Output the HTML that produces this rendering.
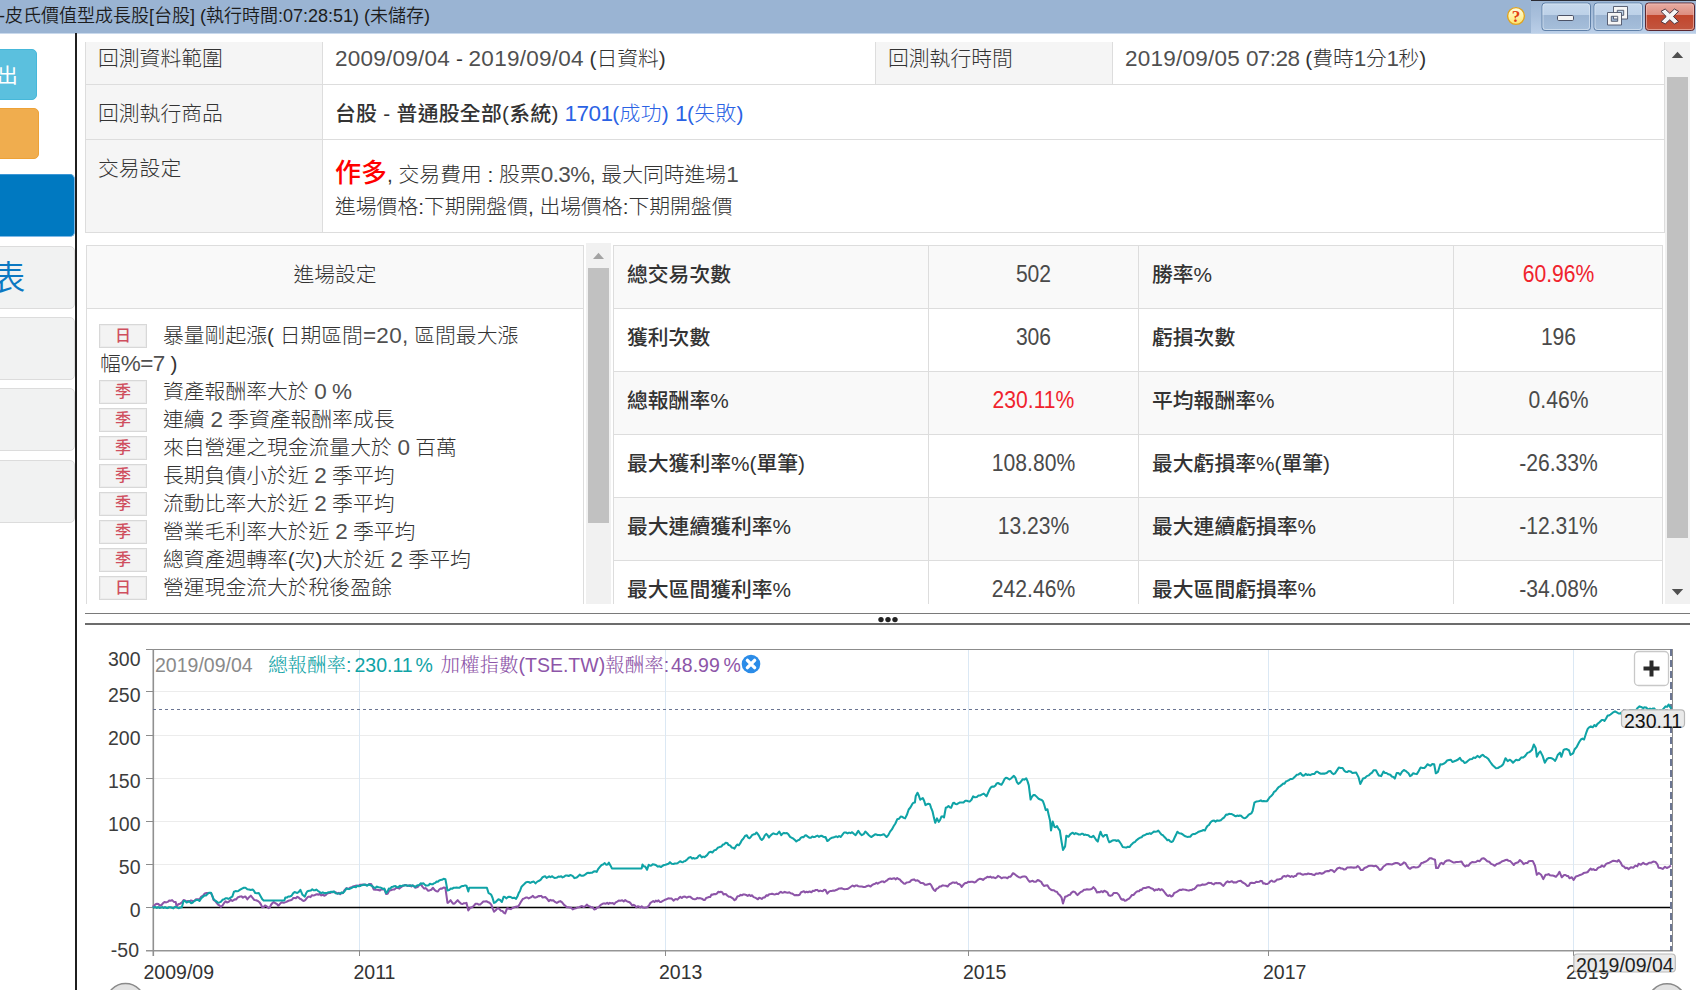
<!DOCTYPE html>
<html lang="zh-Hant">
<head>
<meta charset="utf-8">
<title>回測報告</title>
<style>
*{box-sizing:border-box;margin:0;padding:0}
html,body{width:1696px;height:990px;overflow:hidden;background:#fff}
body{position:relative;font-family:"Liberation Sans","Noto Sans CJK TC","Noto Sans CJK SC",sans-serif;color:#333;font-size:20.8px;font-weight:300}
.d{font-size:22.500px;letter-spacing:.25px;position:relative;top:-.5px;color:#505050}
.n{font-size:22.500px;letter-spacing:-.55px;position:relative;top:-.5px;color:#505050}
.n.k{color:inherit}
.abs{position:absolute}
.t{position:absolute;white-space:nowrap;line-height:28px;height:28px}
/* title bar */
#tb{left:0;top:0;width:1696px;height:33px;background:#9ab4d3}
#tbr{left:1531px;top:0;width:165px;height:33px;background:linear-gradient(#9db6d4,#a9c0dc 50%,#bbcfe8)}
#tbt{left:-1px;top:2px;font-size:18px;color:#1c1c1c;line-height:28px;font-weight:350}
.wb{position:absolute;top:3px;height:28px;width:49px;border:1px solid #5b7fa8;border-radius:3px;background:linear-gradient(#c3d6ea 0,#bcd1e7 45%,#9ab4d2 46%,#a3bcd8 100%);box-shadow:inset 0 0 0 1px rgba(255,255,255,.45)}
/* sidebar */
.sb{position:absolute;border-radius:5px}
.tab{position:absolute;left:-6px;width:81px;background:#f1f2f2;border:1px solid #dcdcdc;border-radius:5px}
/* info table */
.cell{position:absolute;border-right:1px solid #ddd;border-bottom:1px solid #ddd}
.lab{background:#f5f5f5}
/* stats */
.row{position:absolute;left:613px;width:1050px;height:63px;border-bottom:1px solid #ddd}
.row.odd{background:#f9f9f9}
.sl{font-weight:500;color:#333}
.sv{text-align:center;color:#4a4a4a;font-size:23.600px;transform:scaleX(.895)}
.red{color:#f0232d}
.bd{position:absolute;left:99px;width:48px;height:24px;background:#f3f3f3;border:1px solid #d8d8d8;box-shadow:inset 0 0 0 1px #ececec;color:#cf4f5e;font-size:16px;line-height:22px;text-align:center;font-weight:500}
.li{position:absolute;left:163px;white-space:nowrap;line-height:28px;height:28px;color:#333}
svg text{font-family:"Liberation Sans","Noto Serif CJK TC","Noto Serif CJK SC",sans-serif}
</style>
</head>
<body>

<!-- ===== title bar ===== -->
<div id="tb" class="abs"></div>
<div id="tbr" class="abs"></div>
<div class="abs" style="left:0;top:33px;width:1696px;height:1px;background:#c9d9ec"></div>
<div class="abs" style="left:1531px;top:0;width:165px;height:1px;background:#2b2b33"></div>
<div id="tbt" class="t">-皮氏價值型成長股[台股] (執行時間:07:28:51) (未儲存)</div>
<svg class="abs" style="left:1500px;top:0" width="196" height="34" viewBox="1500 0 196 34">
  <defs>
    <linearGradient id="qg" x1="0" y1="0" x2="0" y2="1"><stop offset="0" stop-color="#fffde2"/><stop offset="0.5" stop-color="#fff3a8"/><stop offset="1" stop-color="#fde36c"/></linearGradient>
    <linearGradient id="bg1" x1="0" y1="0" x2="0" y2="1"><stop offset="0" stop-color="#c6d8ec"/><stop offset="0.42" stop-color="#bdd1e8"/><stop offset="0.43" stop-color="#9bb4d2"/><stop offset="1" stop-color="#a6bfdb"/></linearGradient>
    <linearGradient id="bg2" x1="0" y1="0" x2="0" y2="1"><stop offset="0" stop-color="#e9aea4"/><stop offset="0.42" stop-color="#dd8d80"/><stop offset="0.43" stop-color="#c2452c"/><stop offset="1" stop-color="#c2563f"/></linearGradient>
  </defs>
  <circle cx="1516" cy="16" r="8.400" fill="url(#qg)" stroke="#dfa322" stroke-width="1.400"/>
  <text x="1516" y="21.600" text-anchor="middle" font-size="17" font-weight="bold" fill="#e2410f" style="font-family:'Liberation Serif',serif">?</text>
  <rect x="1542" y="3" width="48.5" height="27.5" rx="3" fill="url(#bg1)" stroke="#5f80a8" stroke-width="1"/>
  <rect x="1543" y="4" width="46.5" height="25.5" rx="2.5" fill="none" stroke="#dbe7f3" stroke-opacity=".7" stroke-width="1"/>
  <rect x="1594" y="3" width="48.5" height="27.5" rx="3" fill="url(#bg1)" stroke="#5f80a8" stroke-width="1"/>
  <rect x="1595" y="4" width="46.5" height="25.5" rx="2.5" fill="none" stroke="#dbe7f3" stroke-opacity=".7" stroke-width="1"/>
  <rect x="1645.5" y="3" width="49" height="27.5" rx="3" fill="url(#bg2)" stroke="#5b2730" stroke-width="1"/>
  <rect x="1646.5" y="4" width="47" height="25.5" rx="2.5" fill="none" stroke="#f3c7be" stroke-opacity=".6" stroke-width="1"/>
  <!-- minimize glyph -->
  <rect x="1557.5" y="15.5" width="16" height="5" rx="1.2" fill="#f4f4f4" stroke="#4c5266" stroke-width="1"/>
  <!-- restore glyph -->
  <path d="M1613.500 6.500h14v12.500h-14z M1617.300 10.300h6.400v5h-6.400z" fill="#f6f6f6" fill-rule="evenodd" stroke="#4c5266" stroke-width=".9"/>
  <path d="M1607.500 12.500h14v12.500h-14z M1611.300 16.300h6.400v5h-6.400z" fill="#f6f6f6" fill-rule="evenodd" stroke="#4c5266" stroke-width=".9"/>
  <!-- close glyph -->
  <path d="M1661 11.400 l4.200 -2.400 l4.600 4.300 l4.600 -4.300 l4.200 2.400 l-5.200 5.100 l5.200 5.100 l-4.200 2.400 l-4.600 -4.300 l-4.600 4.300 l-4.200 -2.400 l5.200 -5.100z" fill="#f6f6f6" stroke="#4a3540" stroke-width="1" stroke-linejoin="round"/>
</svg>


<!-- ===== sidebar ===== -->
<div class="sb" style="left:-8px;top:49px;width:45px;height:51px;background:#5bc0de;border:1px solid #46b8da"></div>
<div class="t" style="left:-3px;top:62px;font-size:20.8px;color:#fff;line-height:28px;font-weight:400">出</div>
<div class="sb" style="left:-8px;top:108px;width:47px;height:51px;background:#f0ad4e;border:1px solid #eea236"></div>
<div class="sb" style="left:-8px;top:174px;width:83px;height:63px;background:#0079c1;border:1px solid #7fb9e6;border-top-color:#3d97d6"></div>
<div class="tab" style="top:246px;height:63px"></div>
<div class="tab" style="top:317px;height:63px"></div>
<div class="tab" style="top:388px;height:63px"></div>
<div class="tab" style="top:460px;height:63px"></div>
<div class="t" style="left:-8.400px;top:258px;font-size:33.800px;color:#0b78c2;line-height:40px;height:40px;font-weight:350">表</div>
<div class="abs" style="left:75px;top:33px;width:2px;height:957px;background:#1f1f1f"></div>


<!-- ===== info table ===== -->
<div class="abs" style="left:85px;top:42px;width:1px;height:191px;background:#ddd"></div>
<div class="cell lab" style="left:86px;top:42px;width:237px;height:43px"></div>
<div class="cell" style="left:323px;top:42px;width:553px;height:43px"></div>
<div class="cell lab" style="left:876px;top:42px;width:237px;height:43px"></div>
<div class="cell" style="left:1113px;top:42px;width:552px;height:43px"></div>
<div class="cell lab" style="left:86px;top:85px;width:237px;height:55px"></div>
<div class="cell" style="left:323px;top:85px;width:1342px;height:55px"></div>
<div class="cell lab" style="left:86px;top:140px;width:237px;height:93px"></div>
<div class="cell" style="left:323px;top:140px;width:1342px;height:93px"></div>
<div class="t" style="left:98px;top:45px">回測資料範圍</div>
<div class="t" style="left:335px;top:45px"><span class="d">2009/09/04</span> - <span class="d">2019/09/04</span> (日資料)</div>
<div class="t" style="left:888px;top:45px">回測執行時間</div>
<div class="t" style="left:1125px;top:45px"><span class="d">2019/09/05</span> <span class="n">07:28</span> (費時<span class="n">1</span>分<span class="n">1</span>秒)</div>
<div class="t" style="left:98px;top:100px">回測執行商品</div>
<div class="t" style="left:335px;top:100px"><b style="font-weight:500;letter-spacing:.3px">台股 - 普通股全部(系統)</b> <span style="color:#2a62e4;letter-spacing:.3px"><span class="n k">1701</span>(成功) <span class="n k">1</span>(失敗)</span></div>
<div class="t" style="left:98px;top:155px">交易設定</div>
<div class="t" style="left:335px;top:156px;line-height:34px;height:34px"><b style="font-size:26px;color:#f00;font-weight:500">作多</b>, 交易費用 : 股票<span class="n">0.3%</span>, 最大同時進場<span class="n">1</span></div>
<div class="t" style="left:335px;top:193px">進場價格:下期開盤價, 出場價格:下期開盤價</div>
<!-- main scrollbar -->
<div class="abs" style="left:1665px;top:42px;width:25px;height:562px;background:#f1f1f1"></div>
<div class="abs" style="left:1667px;top:77px;width:21px;height:461px;background:#c1c1c1"></div>
<svg class="abs" style="left:1665px;top:42px" width="25" height="562"><path d="M6.800 16l5.700-6.200l5.700 6.200z" fill="#505050"/><path d="M6.800 547l5.700 6.200l5.700-6.200z" fill="#505050"/></svg>


<!-- ===== entry panel ===== -->
<div class="abs" style="left:86px;top:245px;width:498px;height:359px;border:1px solid #ddd;border-bottom:none"></div>
<div class="abs" style="left:87px;top:246px;width:496px;height:63px;background:#f9f9f9;border-bottom:1px solid #ddd"></div>
<div class="t" style="left:87px;top:261px;width:496px;text-align:center">進場設定</div>
<div class="bd" style="top:323.5px">日</div><div class="li" style="top:322px">暴量剛起漲( 日期區間<span class="n" style="letter-spacing:.3px">=20,</span> 區間最大漲</div>
<div class="li" style="left:100px;top:350px">幅<span class="n">%=7</span> )</div>
<div class="bd" style="top:379.5px">季</div><div class="li" style="top:378px">資產報酬率大於 <span class="n">0 %</span></div>
<div class="bd" style="top:407.5px">季</div><div class="li" style="top:406px">連續 <span class="n">2</span> 季資產報酬率成長</div>
<div class="bd" style="top:435.5px">季</div><div class="li" style="top:434px">來自營運之現金流量大於 <span class="n">0</span> 百萬</div>
<div class="bd" style="top:463.5px">季</div><div class="li" style="top:462px">長期負債小於近 <span class="n">2</span> 季平均</div>
<div class="bd" style="top:491.5px">季</div><div class="li" style="top:490px">流動比率大於近 <span class="n">2</span> 季平均</div>
<div class="bd" style="top:519.5px">季</div><div class="li" style="top:518px">營業毛利率大於近 <span class="n">2</span> 季平均</div>
<div class="bd" style="top:547.5px">季</div><div class="li" style="top:546px">總資產週轉率(次)大於近 <span class="n">2</span> 季平均</div>
<div class="bd" style="top:575.5px">日</div><div class="li" style="top:574px">營運現金流大於稅後盈餘</div>
<!-- inner scrollbar -->
<div class="abs" style="left:586px;top:243px;width:25px;height:361px;background:#f1f1f1"></div>
<div class="abs" style="left:588px;top:268px;width:21px;height:255px;background:#c1c1c1"></div>
<svg class="abs" style="left:586px;top:243px" width="25" height="24"><path d="M7 16l5.500-6.200l5.500 6.200z" fill="#a3a3a3"/></svg>


<!-- ===== stats ===== -->
<div class="abs" style="left:613px;top:245px;width:1050px;height:359px;overflow:hidden;border-top:1px solid #ddd;border-left:1px solid #ddd;border-right:1px solid #ddd">
<div class="abs" style="left:0;top:0;width:1048px;height:63px;background:#f9f9f9;border-bottom:1px solid #ddd"></div>
<div class="abs" style="left:0;top:63px;width:1048px;height:63px;border-bottom:1px solid #ddd"></div>
<div class="abs" style="left:0;top:126px;width:1048px;height:63px;background:#f9f9f9;border-bottom:1px solid #ddd"></div>
<div class="abs" style="left:0;top:189px;width:1048px;height:63px;border-bottom:1px solid #ddd"></div>
<div class="abs" style="left:0;top:252px;width:1048px;height:63px;background:#f9f9f9;border-bottom:1px solid #ddd"></div>
<div class="abs" style="left:0;top:315px;width:1048px;height:63px"></div>
<div class="abs" style="left:314px;top:0;width:1px;height:360px;background:#ddd"></div>
<div class="abs" style="left:524px;top:0;width:1px;height:360px;background:#ddd"></div>
<div class="abs" style="left:839px;top:0;width:1px;height:360px;background:#ddd"></div>
</div>
<div class="t sl" style="left:627px;top:261px">總交易次數</div>
<div class="t sv " style="left:929px;top:260px;width:209px">502</div>
<div class="t sl" style="left:1152px;top:261px">勝率%</div>
<div class="t sv red" style="left:1454px;top:260px;width:209px">60.96%</div>
<div class="t sl" style="left:627px;top:324px">獲利次數</div>
<div class="t sv " style="left:929px;top:323px;width:209px">306</div>
<div class="t sl" style="left:1152px;top:324px">虧損次數</div>
<div class="t sv " style="left:1454px;top:323px;width:209px">196</div>
<div class="t sl" style="left:627px;top:387px">總報酬率%</div>
<div class="t sv red" style="left:929px;top:386px;width:209px">230.11%</div>
<div class="t sl" style="left:1152px;top:387px">平均報酬率%</div>
<div class="t sv " style="left:1454px;top:386px;width:209px">0.46%</div>
<div class="t sl" style="left:627px;top:450px">最大獲利率%(單筆)</div>
<div class="t sv " style="left:929px;top:449px;width:209px">108.80%</div>
<div class="t sl" style="left:1152px;top:450px">最大虧損率%(單筆)</div>
<div class="t sv " style="left:1454px;top:449px;width:209px">-26.33%</div>
<div class="t sl" style="left:627px;top:513px">最大連續獲利率%</div>
<div class="t sv " style="left:929px;top:512px;width:209px">13.23%</div>
<div class="t sl" style="left:1152px;top:513px">最大連續虧損率%</div>
<div class="t sv " style="left:1454px;top:512px;width:209px">-12.31%</div>
<div class="t sl" style="left:627px;top:576px">最大區間獲利率%</div>
<div class="t sv " style="left:929px;top:575px;width:209px">242.46%</div>
<div class="t sl" style="left:1152px;top:576px">最大區間虧損率%</div>
<div class="t sv " style="left:1454px;top:575px;width:209px">-34.08%</div>
<div class="abs" style="left:600px;top:604px;width:1070px;height:9px;background:#fff"></div>


<!-- ===== splitter ===== -->
<div class="abs" style="left:85px;top:613px;width:1605px;height:1px;background:#7a7a7a"></div>
<div class="abs" style="left:85px;top:623px;width:1605px;height:2px;background:#6c6c6c"></div>
<svg class="abs" style="left:875px;top:614px" width="26" height="10"><circle cx="6" cy="5.600" r="2.700" fill="#222"/><circle cx="13" cy="5.600" r="2.700" fill="#222"/><circle cx="20" cy="5.600" r="2.700" fill="#222"/></svg>


<!-- ===== chart ===== -->
<svg class="abs" style="left:0;top:630px" width="1696" height="360" viewBox="0 630 1696 360">
  <g shape-rendering="crispEdges">
    <!-- horizontal grid -->
    <g stroke="#ececec" stroke-width="1">
      <line x1="153" x2="1672" y1="691.5" y2="691.5"/><line x1="153" x2="1672" y1="735.5" y2="735.5"/>
      <line x1="153" x2="1672" y1="778.5" y2="778.5"/><line x1="153" x2="1672" y1="821.5" y2="821.5"/>
      <line x1="153" x2="1672" y1="864.5" y2="864.5"/>
    </g>
    <!-- vertical grid -->
    <g stroke="#dbe8f4" stroke-width="1">
      <line x1="359.500" x2="359.500" y1="650" y2="950"/><line x1="665.500" x2="665.500" y1="650" y2="950"/>
      <line x1="968.500" x2="968.500" y1="650" y2="950"/><line x1="1268.500" x2="1268.500" y1="650" y2="950"/>
      <line x1="1573.500" x2="1573.500" y1="650" y2="950"/>
    </g>
    <!-- axes -->
    <g stroke="#8c8c8c" stroke-width="1">
      <line x1="146" x2="1673" y1="649.5" y2="649.5"/>
      <line x1="146" x2="1673" y1="950.700" y2="950.700" stroke="#959595" stroke-width="1.600" shape-rendering="auto"/>
      <line x1="153.300" x2="153.300" y1="649" y2="956" stroke="#909090" stroke-width="1.600" shape-rendering="auto"/>
      <line x1="1672.500" x2="1672.500" y1="649" y2="951"/>
      <line x1="146" x2="153" y1="691.5" y2="691.5"/><line x1="146" x2="153" y1="735.5" y2="735.5"/>
      <line x1="146" x2="153" y1="778.5" y2="778.5"/><line x1="146" x2="153" y1="821.5" y2="821.5"/>
      <line x1="146" x2="153" y1="864.5" y2="864.5"/><line x1="146" x2="153" y1="907.5" y2="907.5"/>
      <line x1="359.500" x2="359.500" y1="950" y2="956"/><line x1="665.500" x2="665.500" y1="950" y2="956"/>
      <line x1="968.500" x2="968.500" y1="950" y2="956"/><line x1="1268.500" x2="1268.500" y1="950" y2="956"/>
      <line x1="1573.500" x2="1573.500" y1="950" y2="956"/>
    </g>
    <line x1="153" x2="1672" y1="907.400" y2="907.400" stroke="#000" stroke-width="1.500" shape-rendering="auto"/>
    <line x1="153" x2="1672" y1="709.500" y2="709.500" stroke="#6b7592" stroke-width="1" stroke-dasharray="3 3"/>
    <line x1="1671" x2="1671" y1="649" y2="951" stroke="#6b7592" stroke-width="2" stroke-dasharray="7 4"/>
  </g>
  <!-- series -->
  <path d="M152.7 906.9 L154.1 905.7 L155.6 904.3 L157.1 903.7 L158.4 904.0 L159.7 905.5 L161.5 905.0 L163.3 902.8 L164.7 902.0 L166.2 902.4 L167.7 901.9 L169.2 900.6 L170.6 900.8 L172.1 900.1 L173.9 901.9 L175.7 901.9 L176.5 906.3 L178.3 904.3 L180.1 903.7 L181.8 902.5 L183.6 900.1 L185.1 900.5 L186.6 901.5 L188.0 901.0 L189.5 901.4 L191.0 900.5 L192.5 901.0 L194.2 900.9 L196.0 899.3 L197.8 899.2 L199.5 899.3 L201.3 896.6 L203.1 895.7 L204.8 893.5 L206.6 893.1 L208.1 893.1 L209.6 893.0 L211.0 893.1 L212.4 896.2 L213.7 900.1 L215.2 900.9 L216.6 902.8 L218.1 904.6 L219.4 905.4 L220.8 906.9 L222.5 905.5 L224.3 902.8 L225.6 901.4 L227.0 902.4 L228.3 902.1 L229.6 901.0 L230.9 899.9 L232.3 901.0 L233.6 900.1 L234.9 899.3 L236.2 899.4 L237.6 897.5 L238.9 897.0 L240.2 896.6 L241.5 896.4 L242.9 897.6 L244.2 896.8 L245.5 896.6 L247.3 899.3 L249.1 897.2 L250.8 895.7 L252.6 897.8 L254.4 900.1 L256.1 900.2 L257.9 901.0 L259.4 902.2 L260.9 904.4 L262.3 907.2 L263.7 907.0 L265.0 905.5 L266.8 906.4 L268.5 908.1 L269.8 907.4 L271.2 904.5 L272.5 903.0 L273.8 901.9 L275.3 903.2 L276.8 903.9 L278.3 905.8 L280.0 903.8 L281.8 902.3 L283.3 902.8 L284.9 902.4 L286.4 901.9 L288.0 901.0 L289.3 900.5 L290.6 900.3 L292.0 899.6 L293.3 898.0 L294.6 898.0 L295.9 898.2 L297.3 896.8 L298.6 897.5 L299.9 898.8 L301.2 899.2 L302.6 900.6 L303.9 901.0 L305.2 900.2 L306.6 898.4 L307.9 896.9 L309.2 896.6 L310.5 897.1 L311.9 895.2 L313.2 895.5 L314.5 895.2 L315.8 894.6 L317.2 894.2 L318.5 894.7 L319.8 894.0 L321.3 895.4 L322.8 894.7 L324.2 895.7 L325.7 895.1 L327.2 893.6 L328.7 893.1 L330.0 893.0 L331.3 892.4 L332.6 891.8 L334.0 892.2 L335.7 892.2 L337.5 893.6 L338.8 892.9 L340.2 894.1 L341.5 893.2 L342.8 893.1 L344.6 890.1 L346.4 888.1 L347.7 888.7 L349.0 888.7 L350.3 887.5 L351.7 887.4 L353.1 886.4 L354.5 886.1 L355.9 885.6 L357.3 885.7 L358.7 885.6 L360.2 884.7 L361.6 884.7 L363.0 884.5 L364.4 884.9 L365.8 884.6 L367.1 885.1 L368.5 884.7 L369.8 883.9 L371.1 883.9 L372.4 886.5 L373.8 889.5 L375.3 889.8 L376.9 889.7 L378.4 889.9 L380.0 890.4 L381.4 889.3 L382.9 889.4 L384.4 889.5 L386.2 894.0 L387.6 893.7 L389.1 890.9 L390.6 890.4 L391.9 889.8 L393.2 889.5 L394.6 889.4 L395.9 888.1 L397.7 887.8 L399.4 888.6 L400.8 887.3 L402.1 886.4 L403.4 885.8 L404.7 885.1 L406.1 885.0 L407.4 886.0 L408.7 885.8 L410.0 885.1 L411.4 886.5 L412.7 885.5 L414.0 886.2 L415.3 887.8 L416.7 887.3 L418.0 886.7 L419.3 885.1 L420.7 884.2 L422.4 886.6 L424.2 888.6 L425.5 888.1 L426.8 889.3 L428.2 890.8 L429.5 890.4 L431.3 889.7 L433.0 887.8 L434.8 890.2 L436.6 891.3 L437.9 891.5 L439.2 889.5 L440.6 888.6 L441.9 888.6 L443.6 887.5 L445.4 887.8 L447.5 902.8 L448.0 902.9 L449.3 901.6 L450.6 900.2 L451.9 902.3 L453.3 903.8 L454.7 903.4 L456.2 901.8 L457.7 900.2 L459.5 902.3 L461.2 903.8 L462.6 904.0 L463.9 903.2 L465.2 903.2 L466.5 902.9 L468.3 910.5 L470.1 908.0 L471.8 907.3 L473.6 906.1 L475.4 903.8 L477.1 903.7 L478.9 904.6 L480.4 904.4 L481.9 902.9 L483.3 901.6 L484.8 901.4 L486.3 901.2 L487.8 902.0 L489.5 902.8 L491.3 904.6 L492.6 908.4 L494.0 911.7 L495.7 910.3 L497.5 908.2 L499.3 908.8 L501.0 910.8 L502.4 910.9 L503.7 912.6 L505.1 913.5 L507.2 908.2 L509.0 908.8 L510.8 909.1 L512.5 908.0 L514.3 907.3 L516.1 906.6 L517.8 906.9 L519.6 904.2 L521.4 901.1 L522.8 899.0 L524.3 898.4 L525.8 897.6 L527.3 897.5 L528.7 898.4 L530.2 897.6 L531.5 897.0 L532.9 895.8 L534.2 897.4 L535.5 897.6 L537.0 897.0 L538.5 896.1 L539.9 896.1 L541.3 895.9 L542.6 897.5 L543.9 897.2 L545.3 897.0 L547.0 898.7 L548.8 901.1 L550.3 899.9 L551.7 900.5 L553.2 900.2 L555.0 901.9 L556.8 902.9 L558.5 901.8 L560.3 901.1 L562.1 902.4 L563.8 904.6 L565.3 905.8 L566.8 907.2 L568.3 907.3 L569.7 907.5 L571.2 907.8 L572.7 909.4 L574.4 908.5 L576.2 908.2 L577.7 907.4 L579.2 907.3 L580.6 906.4 L582.0 906.1 L583.3 906.9 L585.1 906.4 L586.8 904.6 L588.3 906.0 L589.8 906.4 L591.2 907.3 L592.7 907.3 L594.2 909.4 L595.7 909.1 L597.1 907.5 L598.6 907.3 L600.1 905.5 L601.6 904.3 L603.0 903.6 L604.5 903.4 L605.8 903.8 L607.2 902.7 L608.5 903.9 L609.8 902.9 L611.3 903.3 L612.8 903.1 L614.2 904.1 L615.7 902.4 L617.2 901.6 L618.7 900.6 L620.4 900.7 L622.2 900.2 L623.7 901.4 L625.2 900.1 L626.6 901.1 L628.1 901.8 L629.6 902.3 L631.0 903.8 L632.4 905.5 L633.7 904.8 L635.0 905.6 L636.4 907.3 L637.7 906.2 L639.0 906.6 L640.3 907.4 L641.7 906.4 L643.1 907.6 L644.6 907.7 L646.1 907.6 L647.6 907.0 L649.0 905.3 L650.5 902.9 L651.8 902.0 L653.2 901.1 L654.5 902.0 L655.8 900.6 L657.1 901.4 L658.5 900.4 L659.8 901.9 L661.1 902.0 L662.4 901.1 L663.8 900.4 L665.1 899.7 L666.4 899.3 L668.2 898.3 L670.0 898.4 L671.7 898.6 L673.5 900.6 L674.8 899.5 L676.2 899.1 L677.5 899.6 L678.8 898.1 L680.3 896.9 L681.8 898.0 L683.2 896.7 L685.0 896.6 L686.8 897.6 L688.5 896.8 L690.3 896.7 L691.8 898.2 L693.3 899.1 L694.7 899.3 L696.1 898.9 L697.4 897.9 L698.7 898.4 L700.0 898.1 L701.8 898.7 L703.6 899.9 L704.9 900.0 L706.2 897.9 L707.6 897.5 L708.9 897.0 L710.2 897.0 L711.5 894.6 L712.9 894.6 L714.2 894.0 L715.5 894.2 L716.8 893.6 L718.2 891.8 L719.5 892.3 L720.8 891.8 L722.2 892.3 L723.5 894.4 L724.8 894.0 L726.1 894.2 L727.5 895.8 L728.8 896.8 L730.1 896.7 L731.6 897.6 L733.1 898.6 L734.5 900.2 L735.9 899.3 L737.2 896.7 L738.0 896.2 L739.3 896.0 L740.6 894.9 L741.9 895.3 L743.3 894.4 L744.7 894.6 L746.2 895.0 L747.7 895.9 L749.2 894.7 L750.6 896.0 L752.1 895.3 L753.6 897.1 L755.1 897.6 L756.5 898.3 L757.9 899.3 L759.2 897.7 L760.5 898.2 L761.8 898.9 L763.3 897.6 L764.8 897.4 L766.3 895.3 L767.7 895.8 L769.2 894.3 L770.7 894.1 L772.2 893.7 L773.6 894.2 L775.1 894.4 L776.6 893.8 L778.1 894.1 L779.5 892.7 L780.9 891.8 L782.2 892.8 L783.5 892.5 L784.8 891.8 L786.3 892.6 L787.8 892.7 L789.3 892.3 L790.6 893.3 L791.9 893.5 L793.2 894.2 L794.6 895.3 L796.3 895.1 L798.1 895.3 L799.6 894.7 L801.1 892.2 L802.5 891.8 L803.9 891.3 L805.2 892.5 L806.5 891.7 L807.8 892.3 L809.6 891.5 L811.4 892.3 L812.8 890.7 L814.3 890.9 L815.8 890.0 L817.3 889.9 L818.7 891.3 L820.2 890.6 L821.5 891.1 L822.9 891.2 L824.2 889.7 L825.5 890.0 L827.3 893.6 L828.8 891.9 L830.2 891.0 L831.7 890.9 L833.2 890.6 L834.7 890.7 L836.1 890.0 L837.5 889.5 L838.8 888.6 L840.1 888.5 L841.4 888.3 L842.9 888.8 L844.4 889.2 L845.9 889.1 L847.2 888.9 L848.5 888.5 L849.8 887.5 L851.2 886.5 L852.6 885.5 L854.1 886.5 L855.6 885.6 L857.1 885.5 L858.5 886.3 L860.0 886.5 L861.8 886.5 L863.6 887.0 L865.3 886.9 L867.1 886.0 L868.9 885.6 L870.6 886.5 L872.1 885.1 L873.6 884.2 L875.1 883.8 L876.4 882.7 L877.7 883.7 L879.0 882.7 L880.4 882.1 L881.7 881.5 L883.0 881.4 L884.3 882.3 L885.7 881.2 L887.1 880.3 L888.6 878.9 L890.1 878.5 L891.6 879.0 L893.0 878.6 L894.5 878.2 L895.8 879.4 L897.2 878.0 L898.5 879.0 L899.8 879.4 L901.1 881.1 L902.5 882.3 L903.8 883.5 L905.1 883.8 L906.6 882.4 L908.1 882.3 L909.6 882.1 L911.0 880.5 L912.5 879.7 L914.0 879.4 L915.7 880.7 L917.5 880.3 L919.0 881.3 L920.5 882.9 L921.9 882.9 L923.4 883.3 L924.9 884.8 L926.4 884.7 L928.1 884.2 L929.9 883.8 L931.2 885.1 L932.5 887.9 L933.9 890.0 L935.2 890.9 L936.7 888.7 L938.1 888.1 L939.6 886.5 L941.1 886.4 L942.6 885.4 L944.0 885.6 L945.8 885.8 L947.6 886.5 L949.4 884.3 L951.1 883.5 L952.4 882.6 L953.8 882.5 L955.1 882.9 L956.4 882.4 L957.8 883.9 L959.1 884.1 L960.4 884.9 L961.7 887.0 L963.5 884.6 L965.3 882.9 L966.7 883.0 L968.2 881.8 L969.7 882.1 L971.2 881.8 L972.6 881.7 L974.1 882.4 L975.6 882.0 L977.1 880.5 L978.5 879.4 L980.0 878.8 L981.5 879.0 L983.0 879.9 L984.4 878.7 L985.9 877.9 L987.4 876.8 L988.9 877.3 L990.3 876.6 L991.8 877.6 L993.6 877.3 L995.3 878.2 L996.7 877.4 L998.0 875.9 L999.8 876.8 L1001.5 878.2 L1003.0 877.6 L1004.5 877.4 L1006.0 877.6 L1007.4 878.2 L1008.9 876.7 L1010.4 876.8 L1011.7 875.1 L1013.0 873.2 L1014.5 874.0 L1016.0 875.2 L1017.5 876.4 L1018.9 877.2 L1020.4 877.6 L1021.9 876.8 L1023.3 876.6 L1024.8 876.4 L1026.2 877.0 L1028.0 879.8 L1029.7 881.8 L1031.2 881.2 L1032.7 880.8 L1034.2 881.8 L1035.9 881.7 L1037.7 880.0 L1039.5 880.8 L1041.2 881.8 L1042.6 884.4 L1043.9 885.9 L1045.7 885.4 L1047.4 885.3 L1049.2 888.3 L1051.0 889.7 L1052.4 890.3 L1053.9 890.3 L1055.4 891.5 L1056.9 891.8 L1058.3 894.0 L1059.8 895.1 L1061.6 897.7 L1063.0 903.5 L1065.1 896.8 L1066.9 896.2 L1068.6 895.1 L1070.0 894.8 L1071.3 892.9 L1073.1 891.6 L1074.8 891.9 L1076.2 893.7 L1077.5 895.1 L1079.3 893.2 L1081.0 891.9 L1082.5 891.2 L1084.0 889.8 L1085.5 889.7 L1086.9 889.2 L1088.4 889.6 L1089.9 889.4 L1091.6 889.1 L1093.4 887.1 L1095.2 889.0 L1097.0 892.4 L1098.4 892.0 L1099.9 892.2 L1101.4 891.2 L1102.8 892.2 L1104.3 890.8 L1105.8 891.5 L1107.3 892.3 L1108.7 895.3 L1110.2 895.9 L1112.0 895.3 L1113.8 892.9 L1115.3 892.9 L1116.9 892.9 L1118.9 894.9 L1120.8 898.6 L1122.2 899.8 L1123.5 899.3 L1124.8 900.7 L1126.1 900.4 L1127.6 899.4 L1129.1 898.6 L1130.6 896.8 L1132.0 895.0 L1133.5 895.0 L1135.0 893.3 L1136.3 891.9 L1137.6 891.3 L1139.0 891.3 L1140.3 889.7 L1141.6 889.9 L1142.9 888.3 L1144.3 887.9 L1145.6 888.0 L1147.4 887.3 L1149.1 887.1 L1150.5 888.0 L1151.8 888.6 L1153.1 889.0 L1154.4 890.6 L1155.9 889.6 L1157.4 889.9 L1158.9 888.9 L1160.3 890.2 L1161.8 889.2 L1163.3 890.6 L1165.1 893.0 L1166.8 895.1 L1168.3 896.0 L1169.8 895.1 L1171.2 896.5 L1172.7 895.8 L1174.2 893.0 L1175.7 892.4 L1177.1 891.7 L1178.6 890.7 L1180.1 889.7 L1181.4 890.0 L1182.7 889.4 L1184.1 889.6 L1185.4 889.7 L1187.2 890.3 L1188.9 890.6 L1190.3 890.0 L1191.6 890.1 L1192.9 889.2 L1194.2 888.9 L1195.7 887.6 L1197.2 885.6 L1198.7 885.3 L1200.0 885.4 L1201.3 885.0 L1202.6 884.4 L1204.0 884.8 L1205.4 884.6 L1206.9 883.9 L1208.4 882.7 L1209.7 883.0 L1211.0 882.9 L1212.4 883.9 L1213.7 884.4 L1215.0 883.3 L1216.4 883.0 L1217.7 883.2 L1219.0 883.0 L1220.5 883.2 L1222.0 884.8 L1223.4 885.9 L1224.8 884.1 L1226.1 882.3 L1227.6 881.3 L1229.0 882.2 L1230.5 881.8 L1232.0 881.2 L1233.5 882.6 L1234.9 882.3 L1236.4 882.4 L1237.9 881.4 L1239.4 880.9 L1240.8 880.8 L1242.3 882.3 L1243.8 883.0 L1245.5 884.2 L1247.3 885.9 L1248.8 885.7 L1250.3 883.0 L1251.7 882.7 L1253.2 883.1 L1254.7 883.0 L1256.2 881.8 L1257.6 881.9 L1259.1 881.8 L1260.6 880.9 L1261.9 881.1 L1263.2 883.4 L1264.6 883.3 L1265.9 884.1 L1267.4 884.0 L1268.8 883.0 L1270.3 881.3 L1271.6 880.5 L1273.0 881.6 L1274.3 881.8 L1275.6 880.9 L1277.1 879.5 L1278.6 879.4 L1280.0 879.1 L1281.5 878.6 L1283.0 876.4 L1284.5 876.0 L1285.9 876.7 L1287.4 875.5 L1288.9 876.0 L1290.4 876.9 L1291.8 876.0 L1293.3 877.0 L1294.6 876.1 L1296.0 876.0 L1297.3 873.8 L1298.6 873.5 L1300.1 873.4 L1301.6 874.3 L1303.0 874.7 L1304.8 874.1 L1306.6 874.2 L1308.2 873.5 L1309.8 873.9 L1311.4 874.0 L1313.0 874.8 L1314.5 875.1 L1316.1 873.6 L1318.0 873.7 L1319.8 873.0 L1321.7 873.8 L1323.6 873.0 L1325.5 871.4 L1327.4 871.1 L1328.9 871.1 L1330.5 870.0 L1332.3 870.3 L1334.2 872.1 L1335.8 870.4 L1337.3 868.5 L1339.5 867.6 L1341.1 868.5 L1342.6 868.6 L1344.1 869.5 L1345.6 869.3 L1347.1 867.6 L1349.0 867.5 L1350.9 867.3 L1352.8 867.6 L1354.7 867.6 L1356.2 867.5 L1357.7 866.1 L1359.2 867.3 L1360.8 870.0 L1362.7 870.0 L1364.5 868.0 L1366.4 867.3 L1368.3 866.1 L1370.2 865.7 L1372.1 865.8 L1374.0 866.3 L1375.9 865.8 L1377.8 867.4 L1379.7 870.0 L1381.6 869.2 L1383.5 866.5 L1385.0 865.5 L1386.5 864.2 L1388.4 864.0 L1390.3 864.2 L1392.2 864.4 L1394.1 863.5 L1395.6 863.1 L1397.1 863.0 L1398.6 863.4 L1400.2 865.0 L1402.0 864.2 L1403.9 862.4 L1405.5 863.2 L1407.0 865.8 L1408.5 867.9 L1410.0 868.8 L1411.9 867.4 L1413.8 867.0 L1415.7 867.4 L1417.6 867.3 L1419.5 866.1 L1421.4 863.0 L1422.9 862.7 L1424.4 862.0 L1425.9 861.5 L1427.4 860.5 L1429.7 858.2 L1431.2 858.2 L1432.7 858.9 L1435.0 859.7 L1436.1 868.0 L1438.0 868.0 L1440.3 863.5 L1441.8 862.9 L1443.3 864.2 L1445.2 861.5 L1447.1 860.5 L1449.0 860.2 L1450.9 861.2 L1453.2 862.4 L1454.7 862.5 L1456.2 862.0 L1457.7 862.0 L1459.6 861.8 L1461.5 861.5 L1463.4 864.8 L1465.3 866.5 L1466.8 865.4 L1468.3 865.8 L1470.2 863.3 L1472.1 862.0 L1474.0 862.3 L1475.9 862.0 L1477.8 860.7 L1479.7 861.2 L1481.6 858.8 L1483.5 858.2 L1485.4 859.4 L1487.3 861.2 L1489.2 861.8 L1491.1 863.9 L1493.0 864.6 L1494.8 865.8 L1496.7 864.1 L1498.6 863.5 L1500.5 862.5 L1502.4 861.2 L1503.9 860.8 L1505.5 860.0 L1507.0 859.7 L1508.5 860.8 L1510.0 860.9 L1511.9 862.9 L1513.8 865.0 L1515.3 863.2 L1516.8 862.7 L1518.3 862.2 L1519.8 860.0 L1521.7 861.6 L1523.6 864.2 L1525.5 863.0 L1527.4 863.0 L1528.9 861.2 L1530.5 860.9 L1532.7 860.9 L1535.0 865.8 L1536.8 874.8 L1538.8 873.0 L1541.1 874.8 L1543.3 879.1 L1545.6 874.8 L1547.1 874.7 L1548.6 874.1 L1550.0 875.3 L1551.4 875.5 L1552.7 875.5 L1554.3 876.0 L1555.9 876.8 L1558.2 874.1 L1559.5 871.8 L1561.8 877.3 L1564.1 875.0 L1565.5 875.0 L1566.8 875.9 L1568.2 876.1 L1569.5 878.2 L1571.8 877.3 L1573.6 880.0 L1575.9 876.4 L1577.5 876.1 L1579.1 875.3 L1580.7 874.8 L1582.3 874.1 L1583.6 873.1 L1585.0 872.7 L1586.4 872.6 L1587.7 872.0 L1589.1 870.2 L1590.5 868.6 L1591.8 869.7 L1593.2 869.1 L1594.8 870.0 L1596.4 870.0 L1597.7 868.2 L1599.1 867.3 L1600.5 867.1 L1601.8 865.5 L1604.1 866.8 L1605.9 864.1 L1607.7 863.2 L1609.5 862.7 L1610.9 862.0 L1612.3 861.1 L1613.6 860.8 L1615.0 860.9 L1617.3 861.6 L1618.6 860.0 L1620.5 862.3 L1622.3 865.9 L1623.9 866.5 L1625.5 868.2 L1627.0 867.8 L1628.6 869.1 L1630.9 867.3 L1633.2 867.7 L1635.5 865.6 L1637.3 866.4 L1638.6 863.8 L1640.9 864.7 L1643.2 862.7 L1645.0 864.1 L1646.8 864.4 L1649.1 862.7 L1651.4 862.7 L1653.2 861.6 L1655.5 862.0 L1657.3 864.1 L1658.6 867.7 L1660.5 868.0 L1662.7 868.9 L1665.0 866.8 L1666.8 868.0 L1669.1 866.8 L1670.9 865.5" fill="none" stroke="#8d55a8" stroke-width="2.050" stroke-linejoin="round"/>
  <path d="M152.7 907.6 L154.0 907.3 L155.4 907.0 L156.8 908.0 L158.1 907.0 L159.5 907.9 L160.9 907.6 L162.2 907.1 L163.6 908.0 L165.0 907.1 L166.3 907.9 L167.7 908.1 L169.1 907.2 L170.5 907.2 L171.9 907.7 L173.4 908.4 L174.8 906.9 L176.2 907.0 L177.6 907.7 L179.0 908.2 L180.4 907.5 L181.8 907.2 L183.6 901.0 L185.1 901.1 L186.6 902.5 L188.0 901.9 L189.5 901.3 L191.0 903.2 L192.5 902.8 L194.2 901.1 L196.0 900.1 L197.8 899.9 L199.5 901.0 L201.3 898.1 L203.1 896.6 L204.5 895.4 L206.0 895.4 L207.5 894.0 L209.3 892.7 L211.0 892.7 L212.4 896.1 L213.7 899.3 L215.2 900.7 L216.6 901.4 L218.1 902.8 L219.4 902.4 L220.8 901.9 L222.5 899.8 L224.3 899.3 L225.6 898.2 L227.0 898.3 L228.3 898.9 L229.6 898.4 L230.9 897.4 L232.3 896.6 L234.0 891.7 L235.5 891.1 L237.0 891.3 L238.4 890.9 L240.2 889.7 L242.0 888.6 L243.8 887.8 L245.5 887.8 L247.3 889.2 L249.1 889.5 L250.8 889.9 L252.6 889.5 L253.9 890.8 L255.3 893.1 L257.0 893.2 L258.8 893.1 L260.6 896.2 L262.3 899.3 L263.7 900.6 L265.0 900.5 L266.4 900.5 L267.8 900.5 L269.2 900.5 L270.5 900.5 L271.9 900.5 L273.3 900.5 L274.7 900.5 L276.1 900.5 L277.5 900.5 L278.9 900.5 L280.3 900.5 L281.7 900.5 L283.1 900.5 L284.4 900.5 L285.3 897.5 L286.8 897.6 L288.3 896.5 L289.7 896.6 L291.5 895.8 L293.3 893.1 L294.6 892.1 L295.9 892.5 L297.3 892.9 L298.6 892.2 L300.4 889.9 L302.5 894.8 L304.8 896.6 L306.1 893.3 L307.4 891.3 L309.2 890.8 L311.0 890.4 L312.3 889.3 L313.6 890.3 L315.0 890.3 L316.3 889.5 L318.1 891.0 L319.8 892.2 L321.3 893.2 L322.8 892.4 L324.2 893.1 L325.7 893.1 L327.2 892.7 L328.7 892.2 L330.0 892.1 L331.3 891.7 L332.6 892.2 L334.0 891.3 L335.7 893.3 L337.5 893.6 L338.8 893.4 L340.2 893.6 L341.5 892.4 L342.8 893.1 L344.6 891.2 L346.4 888.6 L347.7 888.7 L349.0 889.1 L350.3 888.6 L351.7 887.8 L353.1 887.1 L354.5 887.0 L355.9 887.2 L357.3 885.7 L358.7 886.3 L360.2 886.0 L361.6 885.2 L363.0 884.9 L364.4 884.5 L365.8 885.1 L367.1 885.7 L368.5 884.6 L369.8 884.9 L371.1 885.5 L372.4 886.2 L373.8 887.4 L375.3 888.1 L376.9 886.6 L378.4 887.3 L380.0 887.4 L381.4 887.9 L382.9 889.0 L384.4 888.6 L386.2 893.1 L387.5 891.5 L388.8 888.6 L390.1 888.8 L391.5 887.1 L392.8 886.8 L394.1 886.3 L395.5 886.1 L396.9 887.1 L398.4 887.2 L399.8 885.7 L401.2 886.3 L402.6 885.6 L404.0 885.5 L405.4 885.3 L406.9 885.6 L408.3 885.5 L409.7 885.9 L411.1 885.6 L412.5 885.4 L413.9 886.4 L415.3 886.9 L416.7 885.7 L418.0 885.2 L419.3 885.1 L420.7 883.3 L422.0 883.7 L423.3 883.3 L424.6 884.5 L426.0 885.6 L427.3 885.5 L428.6 885.3 L429.9 883.7 L431.3 884.2 L432.6 884.3 L433.9 883.4 L435.2 882.9 L436.6 881.6 L437.9 881.7 L439.2 880.5 L440.6 880.1 L441.9 879.8 L443.6 878.8 L445.4 879.3 L447.5 890.4 L449.2 890.1 L450.8 888.5 L452.4 888.7 L453.8 887.7 L455.2 887.8 L456.6 887.5 L458.0 887.7 L459.5 887.8 L460.9 886.6 L462.3 886.0 L463.7 885.9 L465.1 885.4 L466.5 885.7 L468.3 891.4 L469.2 887.8 L470.5 887.8 L471.9 887.8 L473.3 887.8 L474.6 887.8 L476.0 887.8 L477.4 887.8 L478.7 887.8 L480.1 887.8 L481.4 887.8 L482.8 887.8 L484.2 887.8 L485.5 887.8 L486.9 887.8 L488.6 893.1 L490.0 893.8 L491.3 894.9 L492.6 898.0 L494.0 902.9 L495.4 902.4 L496.9 900.7 L498.4 899.3 L500.1 900.0 L501.9 902.0 L503.7 896.7 L505.0 897.1 L506.3 898.4 L507.7 897.3 L509.0 896.7 L510.8 897.1 L512.5 898.1 L514.3 897.7 L516.1 898.8 L517.4 896.6 L518.7 893.1 L520.0 891.0 L521.4 887.0 L522.8 885.4 L524.3 884.0 L525.8 882.5 L527.3 881.9 L528.7 882.0 L530.2 882.9 L532.0 882.0 L533.8 881.6 L535.5 883.4 L537.3 881.6 L539.1 880.8 L540.8 879.6 L542.6 877.2 L543.9 876.6 L545.3 876.3 L546.6 878.0 L547.9 877.2 L549.2 876.4 L550.6 877.2 L551.9 876.2 L553.2 877.1 L554.5 877.9 L555.9 877.7 L557.2 877.4 L558.5 876.5 L559.8 876.7 L561.2 876.3 L562.5 877.4 L563.8 876.9 L565.6 875.5 L567.1 875.5 L568.7 876.0 L570.2 875.1 L571.8 875.5 L573.1 876.3 L574.4 878.1 L575.8 877.8 L577.1 877.3 L578.4 876.1 L579.7 874.6 L581.5 875.8 L582.8 875.8 L584.2 875.2 L585.5 874.4 L586.8 873.3 L588.2 872.7 L589.5 873.1 L590.8 872.7 L592.1 872.8 L593.6 871.6 L595.1 871.3 L596.6 871.9 L598.3 868.8 L600.1 866.6 L601.6 865.0 L603.0 864.6 L604.5 863.1 L606.3 864.8 L607.6 864.6 L608.9 862.7 L610.4 865.4 L611.9 868.4 L613.3 868.4 L614.6 868.4 L616.0 868.4 L617.3 868.4 L618.7 868.4 L620.0 868.4 L621.4 868.4 L622.8 868.4 L624.1 868.4 L625.5 868.4 L626.8 868.4 L628.2 868.4 L629.5 868.4 L630.9 868.4 L632.2 868.4 L633.6 868.4 L634.9 868.4 L636.3 868.4 L637.6 868.4 L639.0 868.4 L640.3 868.4 L641.7 868.4 L642.5 864.5 L643.9 866.4 L645.2 866.6 L647.0 869.8 L648.7 864.8 L650.1 865.7 L651.4 865.5 L652.7 864.3 L654.0 864.5 L655.8 865.0 L657.6 866.6 L659.4 866.3 L661.1 867.0 L662.6 865.7 L664.1 865.0 L665.5 864.8 L667.0 864.2 L668.5 863.8 L670.0 862.2 L671.7 863.7 L673.5 864.0 L674.8 863.5 L676.2 863.4 L677.5 863.2 L678.8 862.2 L680.1 861.2 L681.5 862.0 L682.8 862.3 L684.1 861.3 L685.4 860.9 L686.8 859.8 L688.1 858.3 L689.4 857.4 L690.8 857.1 L692.1 858.6 L693.4 858.0 L694.7 858.6 L696.1 858.3 L697.4 857.8 L698.7 855.8 L700.0 855.1 L701.8 857.4 L703.1 856.6 L704.5 857.1 L705.8 856.1 L707.1 855.1 L708.9 852.5 L710.7 851.8 L712.4 852.5 L714.2 850.4 L716.0 849.8 L717.7 847.8 L719.5 847.1 L721.3 846.6 L723.0 844.5 L724.4 844.2 L725.7 842.7 L727.2 842.9 L728.6 845.1 L730.1 845.4 L731.6 847.4 L733.1 847.8 L734.5 848.6 L735.9 846.2 L737.2 844.5 L738.8 845.3 L740.3 843.2 L741.8 840.2 L743.3 838.7 L745.0 836.0 L746.8 835.2 L748.1 837.6 L749.5 838.2 L750.8 837.0 L752.1 835.2 L753.6 834.3 L755.1 834.2 L756.5 832.5 L757.9 834.2 L759.2 836.1 L760.5 838.7 L761.8 840.0 L763.3 838.6 L764.8 835.4 L766.3 833.9 L767.6 835.2 L768.9 837.5 L770.4 835.7 L771.9 834.3 L773.3 833.4 L775.1 834.0 L776.9 834.3 L779.2 831.6 L781.3 835.2 L782.6 833.6 L784.0 832.9 L785.4 833.2 L786.9 833.1 L788.4 834.3 L790.1 836.8 L791.9 837.8 L793.4 838.7 L794.9 840.1 L796.3 841.4 L797.8 840.4 L799.3 839.8 L800.8 837.8 L802.1 837.0 L803.4 837.3 L804.7 835.8 L806.1 835.2 L807.8 836.6 L809.6 837.8 L810.9 837.7 L812.3 836.5 L813.6 837.1 L814.9 837.0 L816.2 836.1 L817.6 835.6 L818.9 836.9 L820.2 836.1 L821.5 835.7 L822.9 836.5 L824.2 837.2 L825.5 837.0 L827.3 841.0 L828.8 840.1 L830.2 838.6 L831.7 837.8 L833.2 837.4 L834.7 837.0 L836.1 836.4 L837.6 837.1 L839.1 836.0 L840.6 837.0 L842.3 834.9 L844.1 832.5 L845.9 832.5 L847.6 833.4 L849.1 832.6 L850.6 833.1 L852.1 832.2 L853.8 833.7 L855.6 835.2 L856.9 833.1 L858.3 830.8 L860.0 833.5 L861.8 835.2 L863.6 834.2 L865.3 831.6 L867.1 833.3 L868.9 835.2 L870.2 836.3 L871.5 837.0 L873.3 835.6 L875.1 834.3 L876.4 834.5 L877.7 835.1 L879.0 834.9 L880.4 835.2 L882.1 834.8 L883.9 834.3 L885.2 835.6 L886.6 837.0 L888.3 835.1 L890.1 831.6 L891.9 829.4 L893.6 826.3 L895.4 823.5 L897.2 819.3 L898.9 818.8 L900.7 816.6 L902.2 816.7 L903.7 817.9 L905.1 818.4 L906.9 814.8 L908.7 809.5 L910.4 807.5 L912.2 804.2 L913.5 802.7 L914.9 802.5 L915.7 796.3 L917.5 792.7 L918.8 795.5 L920.2 799.8 L921.5 798.8 L922.8 798.0 L924.1 800.8 L925.5 805.1 L926.9 804.3 L928.4 803.7 L929.9 804.2 L931.2 808.1 L932.5 811.3 L933.9 817.6 L935.2 822.8 L937.0 818.4 L938.7 821.9 L940.1 820.0 L941.4 816.6 L942.7 816.4 L944.0 817.5 L945.8 807.8 L947.1 807.3 L948.5 806.0 L949.8 807.2 L951.1 807.8 L952.9 803.3 L954.2 802.7 L955.5 804.1 L956.9 804.2 L958.2 803.3 L960.0 802.4 L961.7 802.5 L963.5 802.4 L965.3 800.7 L966.7 800.8 L968.2 801.3 L969.7 801.6 L971.5 799.8 L973.2 796.3 L975.0 797.3 L976.8 797.1 L978.5 795.6 L980.3 795.4 L982.1 794.4 L983.8 793.6 L985.2 795.0 L986.5 796.3 L988.0 793.0 L989.4 789.8 L990.9 787.4 L992.4 786.5 L993.9 786.7 L995.3 785.7 L996.7 783.4 L998.0 783.0 L999.8 784.0 L1001.5 784.8 L1003.0 782.3 L1004.5 779.1 L1006.0 777.7 L1007.7 778.3 L1009.5 779.5 L1011.0 778.5 L1012.4 777.1 L1013.9 775.9 L1015.4 777.7 L1016.9 782.1 L1018.3 783.9 L1020.1 782.7 L1021.9 780.3 L1022.7 779.2 L1024.4 779.6 L1026.2 778.3 L1027.5 781.1 L1028.8 785.4 L1030.6 799.5 L1031.9 796.9 L1033.3 795.1 L1035.0 795.1 L1036.8 796.9 L1038.6 798.7 L1040.3 799.5 L1041.7 800.0 L1043.0 801.3 L1044.3 805.0 L1045.7 810.1 L1047.4 809.3 L1048.7 814.9 L1050.1 820.8 L1051.0 830.5 L1052.7 821.6 L1054.5 827.0 L1055.8 827.3 L1057.1 826.1 L1058.5 828.9 L1059.8 830.5 L1061.6 842.0 L1063.0 849.9 L1065.1 846.4 L1066.3 835.8 L1068.6 836.7 L1070.0 834.6 L1071.3 833.5 L1072.8 832.7 L1074.2 834.1 L1075.7 833.1 L1077.2 833.7 L1078.7 834.5 L1080.1 834.6 L1081.5 833.8 L1082.8 833.7 L1084.1 834.9 L1085.5 834.6 L1086.9 835.1 L1088.4 835.2 L1089.9 836.7 L1091.6 837.1 L1093.4 835.8 L1094.9 838.0 L1096.4 840.3 L1097.8 841.6 L1099.2 835.9 L1100.5 831.7 L1101.8 834.9 L1103.1 836.7 L1104.9 835.0 L1106.7 834.9 L1108.0 839.3 L1109.3 842.3 L1110.8 841.5 L1112.3 840.6 L1113.8 840.2 L1115.2 840.3 L1116.7 841.0 L1118.2 840.2 L1119.7 842.0 L1121.1 844.0 L1122.6 846.9 L1124.4 847.3 L1126.1 847.6 L1127.9 846.8 L1129.7 846.9 L1131.0 845.0 L1132.3 843.8 L1133.7 842.4 L1135.0 842.0 L1136.3 840.3 L1137.6 839.4 L1139.0 838.3 L1140.3 837.6 L1141.6 837.3 L1142.9 835.7 L1144.3 835.3 L1145.6 834.6 L1146.9 833.8 L1148.3 834.0 L1149.6 833.2 L1150.9 834.0 L1152.4 832.8 L1153.9 831.6 L1155.3 831.7 L1156.8 831.6 L1158.3 830.5 L1159.9 832.6 L1161.5 834.6 L1163.0 835.3 L1164.5 837.1 L1165.9 838.4 L1167.4 840.3 L1168.9 839.8 L1170.4 841.6 L1171.7 842.0 L1173.0 841.1 L1174.5 837.8 L1176.0 834.8 L1177.4 831.7 L1179.2 833.2 L1181.0 833.5 L1182.5 834.2 L1183.9 835.4 L1185.4 836.3 L1187.2 836.9 L1188.9 836.7 L1190.4 836.7 L1191.9 834.6 L1193.4 834.0 L1194.7 834.1 L1196.0 833.3 L1197.3 832.6 L1198.7 831.7 L1200.2 831.2 L1201.8 830.8 L1203.3 830.0 L1204.9 830.5 L1206.2 827.9 L1207.5 825.9 L1208.8 825.2 L1210.2 822.9 L1211.5 821.4 L1212.8 820.8 L1214.1 820.6 L1215.5 821.6 L1217.2 820.4 L1219.0 820.8 L1220.8 820.3 L1222.5 818.6 L1224.3 817.3 L1226.1 814.6 L1227.6 814.7 L1229.0 813.8 L1230.5 814.0 L1231.8 814.1 L1233.2 814.8 L1234.5 815.7 L1235.8 816.3 L1237.1 815.6 L1238.5 816.0 L1239.8 815.5 L1241.1 815.8 L1242.6 817.4 L1244.1 818.2 L1245.5 818.1 L1247.0 816.8 L1248.5 814.9 L1250.0 814.0 L1251.3 813.4 L1252.6 811.0 L1254.4 802.7 L1256.2 801.6 L1257.9 801.3 L1259.4 801.0 L1260.9 800.4 L1262.3 801.3 L1263.8 801.1 L1265.3 801.3 L1266.8 801.3 L1268.2 799.5 L1269.7 797.2 L1271.2 796.0 L1272.7 794.4 L1274.1 791.8 L1275.6 791.0 L1277.1 789.0 L1278.6 787.1 L1280.0 786.3 L1281.5 785.2 L1283.0 783.6 L1284.5 783.6 L1285.9 781.5 L1287.4 780.9 L1288.9 780.1 L1290.4 779.0 L1291.8 779.1 L1293.3 778.3 L1295.1 776.6 L1296.8 774.8 L1298.6 774.4 L1300.4 773.0 L1301.7 774.6 L1303.0 775.7 L1304.4 775.2 L1305.7 773.9 L1307.2 775.0 L1308.6 774.5 L1310.1 775.1 L1311.6 774.3 L1313.0 774.1 L1314.5 773.9 L1316.1 771.8 L1317.6 771.8 L1319.1 773.0 L1321.0 773.8 L1322.9 773.6 L1324.8 773.6 L1326.7 773.0 L1328.6 771.2 L1330.5 771.1 L1332.0 773.2 L1333.5 774.1 L1335.0 773.3 L1336.5 771.1 L1338.8 767.6 L1340.7 768.0 L1342.6 768.0 L1344.1 770.4 L1345.6 771.8 L1347.1 772.0 L1348.6 771.1 L1350.5 771.4 L1352.4 773.0 L1354.3 772.8 L1356.2 772.6 L1358.5 777.1 L1360.3 783.9 L1361.7 781.3 L1363.0 778.6 L1364.9 778.0 L1366.8 776.1 L1368.7 775.4 L1370.6 773.6 L1372.1 772.6 L1373.6 770.3 L1375.9 770.3 L1377.4 773.1 L1378.9 775.6 L1381.2 776.1 L1383.5 771.5 L1385.0 773.0 L1386.5 773.0 L1388.4 774.3 L1390.3 774.8 L1391.8 776.5 L1393.3 776.9 L1394.8 778.6 L1396.7 773.0 L1398.4 773.0 L1400.2 774.8 L1402.0 771.7 L1403.9 770.0 L1405.5 770.8 L1407.0 772.1 L1408.5 773.3 L1410.0 776.1 L1411.5 775.3 L1413.0 773.3 L1414.9 773.8 L1416.8 774.1 L1418.7 771.1 L1420.6 767.6 L1422.5 768.0 L1424.4 768.0 L1425.9 766.5 L1427.4 764.2 L1428.9 765.0 L1430.5 765.8 L1432.3 764.1 L1434.2 764.2 L1435.8 773.3 L1438.0 771.8 L1440.3 764.2 L1442.2 764.4 L1444.1 763.5 L1445.6 762.4 L1447.1 760.5 L1449.0 760.1 L1450.9 759.7 L1452.4 762.0 L1454.3 761.3 L1456.2 760.5 L1458.1 759.5 L1460.0 757.9 L1461.5 760.5 L1463.0 760.9 L1464.5 763.0 L1466.4 762.2 L1468.3 760.5 L1470.2 759.2 L1472.1 758.9 L1473.6 757.6 L1475.2 757.9 L1477.4 755.9 L1479.7 757.4 L1481.2 755.7 L1482.7 754.8 L1484.6 756.6 L1486.5 757.4 L1488.4 759.1 L1490.3 762.0 L1492.2 764.7 L1494.1 766.5 L1496.0 768.2 L1497.9 768.0 L1499.8 766.9 L1501.7 765.8 L1503.2 764.2 L1505.5 758.2 L1507.7 761.2 L1510.0 759.7 L1511.5 761.0 L1513.0 762.7 L1514.5 761.2 L1516.1 759.7 L1517.6 760.2 L1519.1 760.0 L1521.4 757.4 L1522.9 757.6 L1524.4 756.7 L1525.9 755.0 L1527.4 752.9 L1528.9 752.4 L1530.5 751.4 L1532.0 749.8 L1533.8 744.5 L1535.8 748.3 L1536.8 756.7 L1538.8 752.9 L1540.3 751.4 L1542.6 755.9 L1544.8 762.7 L1547.1 758.9 L1548.8 758.0 L1550.6 758.1 L1552.3 758.6 L1553.6 759.3 L1555.0 760.9 L1556.4 758.4 L1557.7 755.0 L1560.0 752.7 L1561.4 756.8 L1563.6 750.0 L1565.2 749.2 L1566.8 749.1 L1569.1 750.5 L1570.5 755.0 L1571.8 754.2 L1573.2 753.2 L1574.5 749.5 L1576.8 746.8 L1579.1 742.3 L1580.9 739.5 L1582.5 738.6 L1584.1 739.5 L1586.4 732.3 L1587.7 728.9 L1589.1 727.3 L1590.9 726.4 L1592.7 727.3 L1594.5 725.0 L1595.9 726.4 L1597.3 724.1 L1599.5 722.3 L1601.8 720.0 L1603.2 720.0 L1604.5 720.9 L1606.1 718.5 L1607.7 715.5 L1609.1 715.4 L1610.5 714.5 L1612.7 712.7 L1615.0 711.4 L1617.3 712.7 L1618.6 713.5 L1620.0 713.6 L1621.4 712.6 L1622.7 712.3 L1624.1 712.1 L1625.5 711.8 L1626.8 711.3 L1628.2 710.9 L1629.5 711.1 L1630.9 711.4 L1632.3 710.0 L1633.6 710.0 L1635.9 710.5 L1637.3 708.2 L1639.5 706.4 L1641.8 707.3 L1643.2 708.0 L1644.5 707.3 L1645.9 707.4 L1647.3 708.6 L1648.6 709.5 L1650.0 708.5 L1651.4 709.4 L1652.7 708.6 L1654.1 708.4 L1655.5 710.0 L1656.8 710.1 L1658.2 710.5 L1659.5 710.8 L1660.9 710.0 L1662.3 710.2 L1663.6 708.6 L1665.5 706.4 L1667.3 706.8 L1668.6 704.5 L1670.0 706.8 L1671.4 708.6" fill="none" stroke="#0fa3a6" stroke-width="2.050" stroke-linejoin="round"/>
  <!-- y labels -->
  <g font-size="19.500" fill="#3c3c3c" text-anchor="end">
    <text x="140.500" y="665.500">300</text><text x="140.500" y="702.200">250</text><text x="140.500" y="745">200</text>
    <text x="140.500" y="788">150</text><text x="140.500" y="831">100</text><text x="140.500" y="874.200">50</text>
    <text x="140.500" y="917.300">0</text><text x="139" y="956.700">-50</text>
  </g>
  <!-- x labels -->
  <g font-size="19.500" fill="#333">
    <text x="143.500" y="978.700">2009/09</text><text x="353.500" y="978.700">2011</text><text x="659" y="978.700">2013</text>
    <text x="963" y="978.700">2015</text><text x="1263" y="978.700">2017</text><text x="1566" y="978.700">2019</text>
  </g>
  <!-- legend -->
  <g font-size="19.500">
    <text x="155" y="672" fill="#8a8a8a">2019/09/04</text>
    <text y="672" fill="#0fa3a6"><tspan x="268">總報酬率:</tspan><tspan x="354.500">230.11</tspan><tspan x="415.500">%</tspan></text>
    <text y="672" fill="#8d55a8"><tspan x="440.500">加權指數(TSE.TW)報酬率:</tspan><tspan x="671">48.99</tspan><tspan x="723.500">%</tspan></text>
  </g>
  <circle cx="751" cy="664" r="9.300" fill="#2b8ce8"/>
  <path d="M747.400 660.400l7.200 7.200M754.600 660.400l-7.200 7.200" stroke="#fff" stroke-width="3.400" stroke-linecap="round"/>
  <!-- plus button -->
  <rect x="1634.500" y="651.500" width="34" height="34" rx="4" fill="#fff" stroke="#c8c8c8" stroke-width="1.300"/>
  <path d="M1651.500 660.500v16M1643.500 668.500h16" stroke="#2a2a2a" stroke-width="4"/>
  <!-- value label -->
  <rect x="1621.500" y="709.800" width="63" height="17.500" rx="3.500" fill="#eaeaea" stroke="#b9b9b9" stroke-width="1.200"/>
  <text x="1624" y="727.500" font-size="19.500" fill="#111">230.11</text>
  <!-- date label -->
  <rect x="1573.800" y="954" width="101.500" height="18" rx="3.500" fill="#eaeaea" stroke="#b9b9b9" stroke-width="1.200"/>
  <text x="1576" y="971.500" font-size="19.500" fill="#222">2019/09/04</text>
  <!-- slider handles -->
  <circle cx="125.500" cy="1002.400" r="19" fill="#e2e2e2" stroke="#8a8a8a" stroke-width="1.500"/>
  <circle cx="1667" cy="1002.800" r="19" fill="#e2e2e2" stroke="#8a8a8a" stroke-width="1.500"/>
</svg>


</body>
</html>
